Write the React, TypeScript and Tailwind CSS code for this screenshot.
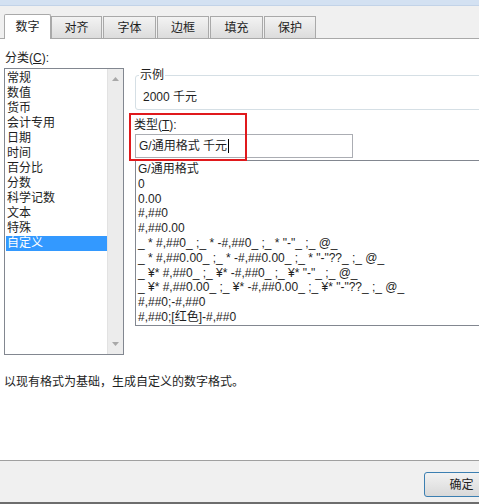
import React from 'react';

const CATEGORIES = ['常规', '数值', '货币', '会计专用', '日期', '时间', '百分比', '分数', '科学记数', '文本', '特殊', '自定义'];

const FORMATS = [
  'G/通用格式',
  '0',
  '0.00',
  '#,##0',
  '#,##0.00',
  '_ * #,##0_ ;_ * -#,##0_ ;_ * "-"_ ;_ @_',
  '_ * #,##0.00_ ;_ * -#,##0.00_ ;_ * "-"??_ ;_ @_',
  '_ ¥* #,##0_ ;_ ¥* -#,##0_ ;_ ¥* "-"_ ;_ @_',
  '_ ¥* #,##0.00_ ;_ ¥* -#,##0.00_ ;_ ¥* "-"??_ ;_ @_',
  '#,##0;-#,##0',
  '#,##0;[红色]-#,##0',
];

const TABS = [
  { label: '对齐', w: 'w-[51px]' },
  { label: '字体', w: 'w-[53px]' },
  { label: '边框', w: 'w-[52px]' },
  { label: '填充', w: 'w-[53px]' },
  { label: '保护', w: 'w-[52px]' },
];

const font = "font-['Liberation_Sans','Noto_Sans_CJK_SC',sans-serif]";

export default function App() {
  return (
    <div className={`w-[479px] h-[504px] overflow-hidden bg-white text-[12px] text-[#1e1e1e] flex flex-col ${font}`}>
      {/* title strip */}
      <div className="h-[6px] shrink-0 bg-[#d3e1f2] border-b border-[#c2d3e8]" />

      {/* tabs */}
      <div className="h-[33px] shrink-0 bg-[#f0f0f0] flex items-end pl-[4px] border-b border-[#a9a9a9]">
        <div className="w-[47px] h-[25px] -mb-px bg-white border border-b-0 border-[#a9a9a9] rounded-t-[2px] flex items-center justify-center leading-none z-10">
          数字
        </div>
        <div className="flex gap-[1px]">
          {TABS.map((t) => (
            <div
              key={t.label}
              className={`${t.w} h-[22px] bg-gradient-to-b from-[#f3f3f3] to-[#dcdcdc] border border-b-0 border-[#a9a9a9] flex items-center justify-center leading-none`}
            >
              {t.label}
            </div>
          ))}
        </div>
      </div>

      {/* body */}
      <div className="flex-1 bg-white flex flex-col px-[4px]">
        <div className="flex items-start">
          {/* category column */}
          <div className="w-[120px] shrink-0 flex flex-col">
            <div className="mt-[12px] h-[15px] leading-[15px] pl-px">
              分类(<span className="underline">C</span>):
            </div>
            <div className="mt-[2px] h-[287px] border border-[#828790] flex">
              <div className="flex-1 flex flex-col pl-px pt-[2px]">
                {CATEGORIES.map((c, i) => (
                  <div
                    key={c}
                    className={`h-[15px] leading-[15px] pl-px ${i === CATEGORIES.length - 1 ? 'bg-[#3399ff] text-white' : ''}`}
                  >
                    {c}
                  </div>
                ))}
              </div>
              <div className="w-[16px] shrink-0 bg-[#ececec] border-l border-[#e2e2e2] flex flex-col justify-between items-center py-[8px]">
                <svg width="7" height="4" viewBox="0 0 7 4">
                  <path d="M0 4 L3.5 0 L7 4 Z" fill="#a8a8a8" />
                </svg>
                <svg width="7" height="4" viewBox="0 0 7 4">
                  <path d="M0 0 L3.5 4 L7 0 Z" fill="#a8a8a8" />
                </svg>
              </div>
            </div>
          </div>

          {/* type column */}
          <div className="ml-[11px] mt-[29px] w-[420px] shrink-0 flex flex-col relative">
            <fieldset className="border border-[#d5dfe5] rounded-[3px] pt-[8px] pb-[4px]">
              <legend className="ml-[3px] px-px h-[14px] leading-[14px]">示例</legend>
              <div className="h-[15px] leading-[15px] pl-[7px]">2000 千元</div>
            </fieldset>
            <div className="mt-[8px] h-[14px] leading-[14px] -ml-px">
              类型(<span className="underline">T</span>):
            </div>
            <div className="mt-[2px] w-[218px] h-[24px] border border-[#abadb3] flex items-center pl-[3px]">
              <span>G/通用格式 千元</span>
              <span className="w-px h-[14px] bg-black ml-px" />
            </div>
            <div className="mt-[2px] h-[166px] border border-[#828790] pt-px pl-[2px]">
              {FORMATS.map((f) => (
                <div key={f} className="h-[14.8px] leading-[14.8px] whitespace-pre">
                  {f}
                </div>
              ))}
            </div>

            {/* red highlight around the type label and input */}
            <div className="absolute left-[-6px] top-[45px] w-[118px] h-[48px] border-2 border-[#e0191c] pointer-events-none" />
          </div>
        </div>

        <div className="mt-[20px] h-[15px] leading-[15px]">以现有格式为基础，生成自定义的数字格式。</div>
      </div>

      {/* footer */}
      <div className="h-[44px] shrink-0 bg-[#f0f0f0] border-t border-[#a0a0a0] border-b-[2px] border-b-[#6d6d6d] flex items-start justify-end pt-[11px]">
        <div className="w-[75px] h-[25px] -mr-[20px] shrink-0 rounded-[3px] border border-[#3c7fb1] bg-gradient-to-b from-[#f2f2f2] to-[#d9d9d9] flex items-center justify-center leading-none">
          确定
        </div>
      </div>
    </div>
  );
}
